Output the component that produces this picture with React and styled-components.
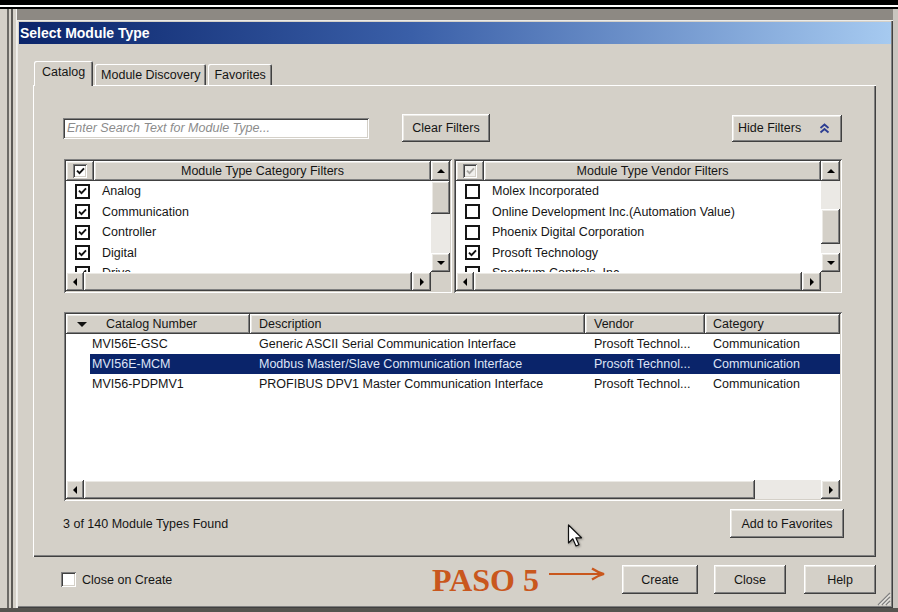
import React from 'react';
import styled, { createGlobalStyle, css } from 'styled-components';

const FACE = '#d4d0c8';
const SHADOW = '#808080';
const DARK = '#404040';
const LIGHT = '#ffffff';
const NAVY = '#0a246a';
const TRACK = '#ebe9e5';
const STEP = '#c9571d';

const GlobalStyle = createGlobalStyle`
  *, *::before, *::after { box-sizing: border-box; }
  html, body { margin: 0; padding: 0; }
  body {
    font-family: "Liberation Sans", Arial, sans-serif;
    font-size: 12.5px;
    color: #151515;
  }
`;

const raised = css`
  background: ${FACE};
  box-shadow:
    inset -1px -1px ${DARK},
    inset 1px 1px ${LIGHT},
    inset -2px -2px ${SHADOW},
    inset 2px 2px #ebe9e4;
`;

const sunken = css`
  box-shadow:
    inset 1px 1px ${SHADOW},
    inset -1px -1px ${LIGHT},
    inset 2px 2px ${DARK},
    inset -2px -2px ${FACE};
`;

const categories = [
  { label: 'Analog', checked: true },
  { label: 'Communication', checked: true },
  { label: 'Controller', checked: true },
  { label: 'Digital', checked: true },
  { label: 'Drive', checked: true },
];

const vendors = [
  { label: 'Molex Incorporated', checked: false },
  { label: 'Online Development Inc.(Automation Value)', checked: false },
  { label: 'Phoenix Digital Corporation', checked: false },
  { label: 'Prosoft Technology', checked: true },
  { label: 'Spectrum Controls, Inc.', checked: false },
];

const modules = [
  ['MVI56E-GSC', 'Generic ASCII Serial Communication Interface', 'Prosoft Technol...', 'Communication'],
  ['MVI56E-MCM', 'Modbus Master/Slave Communication Interface', 'Prosoft Technol...', 'Communication'],
  ['MVI56-PDPMV1', 'PROFIBUS DPV1 Master Communication Interface', 'Prosoft Technol...', 'Communication'],
];

/* ---------- desktop frame ---------- */

const Screen = styled.div`
  position: relative;
  width: 898px;
  height: 612px;
  display: flex;
  flex-direction: column;
  background: #55534f;
  overflow: hidden;
`;

const TopBand = styled.div`
  height: 9px;
  background: linear-gradient(#000 0 5px, #fff 5px 7px, #000 7px 9px);
`;

const Desk = styled.div`
  height: 599px;
  display: flex;
`;

const LeftEdge = styled.div`
  width: 17px;
  background: linear-gradient(
    to right,
    ${FACE} 0 7px,
    #6c6a66 7px 9px,
    ${FACE} 9px 11px,
    #5c5a56 11px 13px,
    ${FACE} 13px 16px,
    #f2f1ee 16px 17px
  );
`;

const RightEdge = styled.div`
  width: 5px;
  background: #c9c5bf;
`;

const Behind = styled.div`
  flex: 1;
  display: flex;
  flex-direction: column;
  padding-top: 11px;
  background: #8d8983;
`;

/* ---------- dialog ---------- */

const Dialog = styled.div`
  position: relative;
  flex: 1;
  display: flex;
  flex-direction: column;
  padding: 2px;
  background: ${FACE};
  box-shadow:
    inset 1px 1px #ecebe7,
    inset -1px -1px ${DARK},
    inset -2px -2px ${SHADOW};
`;

const TitleBar = styled.div`
  height: 22px;
  display: flex;
  align-items: center;
  padding-left: 1px;
  background: linear-gradient(to right, ${NAVY} 0%, #3a5fa8 45%, #a6caf0 100%);
  color: #fff;
  font-weight: bold;
  font-size: 14px;
`;

const DialogBody = styled.div`
  flex: 1;
  display: flex;
  flex-direction: column;
  padding: 17px 15px 0 14px;
`;

const TabStrip = styled.div`
  height: 24px;
  display: flex;
  align-items: flex-end;
  gap: 2px;
  padding-left: 1px;
`;

const Tab = styled.div`
  position: relative;
  display: flex;
  align-items: center;
  height: ${p => (p.active ? '25px' : '21px')};
  margin-bottom: ${p => (p.active ? '-1px' : '0')};
  padding: 0 ${p => (p.active ? '8px' : '6px')};
  padding-bottom: ${p => (p.active ? '3px' : '0')};
  z-index: ${p => (p.active ? 2 : 1)};
  background: ${FACE};
  border-radius: 2px 2px 0 0;
  box-shadow:
    inset 1px 1px ${LIGHT},
    inset -1px 0 ${DARK},
    inset -2px 0 ${SHADOW};
`;

const Panel = styled.div`
  height: 472px;
  display: flex;
  flex-direction: column;
  padding: 29px 34px 19px 31px;
  box-shadow:
    inset 1px 1px ${LIGHT},
    inset -1px -1px ${DARK},
    inset -2px -2px ${SHADOW};
`;

/* ---------- controls ---------- */

const Button = styled.div`
  ${raised};
  display: flex;
  align-items: center;
  justify-content: ${p => (p.spread ? 'space-between' : 'center')};
  width: ${p => p.w}px;
  height: ${p => p.h || 29}px;
  margin-left: ${p => p.ml || 0}px;
  padding: ${p => (p.spread ? '0 12px 0 6px' : '0')};
`;

const Toolbar = styled.div`
  height: 28px;
  display: flex;
  align-items: center;
`;

const SearchBox = styled.input`
  ${sunken};
  width: 306px;
  height: 21px;
  margin-left: -1px;
  padding: 0 4px;
  border: none;
  outline: none;
  background: #fff;
  font-family: "Liberation Sans", Arial, sans-serif;
  font-size: 12.5px;

  &::placeholder {
    color: #8c8c8c;
    font-style: italic;
  }
`;

const Push = styled.div`
  flex: 1;
`;

const FilterRow = styled.div`
  display: flex;
  gap: 2px;
  height: 134px;
  margin-top: 17px;
`;

const ListFrame = styled.div`
  ${sunken};
  flex: ${p => (p.grow ? 1 : 'none')};
  height: ${p => p.h}px;
  margin-top: ${p => p.mt || 0}px;
  padding: 2px;
  display: grid;
  grid-template-columns: ${p => (p.vscroll ? '1fr 19px' : '1fr')};
  grid-template-rows: 1fr 19px;
  background: #fff;
`;

const ListCore = styled.div`
  min-width: 0;
  min-height: 0;
  display: flex;
  flex-direction: column;
  overflow: hidden;
`;

const HeaderRow = styled.div`
  height: 20px;
  flex: none;
  display: flex;
`;

const HeaderCell = styled.div`
  ${raised};
  display: flex;
  align-items: center;
  justify-content: ${p => (p.center ? 'center' : 'flex-start')};
  width: ${p => (p.w ? `${p.w}px` : 'auto')};
  flex: ${p => (p.w ? 'none' : 1)};
  padding-left: ${p => p.pl || 0}px;
  white-space: nowrap;
`;

const FilterItem = styled.div`
  height: 20.5px;
  flex: none;
  display: flex;
  align-items: center;
  padding-left: 9px;
  white-space: nowrap;
`;

const FlatBox = styled.div`
  width: 15px;
  height: 15px;
  flex: none;
  display: flex;
  align-items: center;
  justify-content: center;
  margin-right: 12px;
  border: 2px solid #161616;
  background: #fff;
`;

const SunkenBox = styled.div`
  ${sunken};
  width: ${p => p.size || 15}px;
  height: ${p => p.size || 15}px;
  flex: none;
  display: flex;
  align-items: center;
  justify-content: center;
  background: ${p => (p.muted ? '#f0efec' : '#fff')};
`;

const Tick = ({ color = '#111' }) => (
  <svg width="9" height="8" viewBox="0 0 9 8">
    <path d="M1 3.6 L3.5 6.2 L8 1.4" fill="none" stroke={color} strokeWidth="1.9" />
  </svg>
);

const VScroll = styled.div`
  display: flex;
  flex-direction: column;
  background: ${TRACK};
`;

const HScroll = styled.div`
  display: flex;
  background: ${TRACK};
`;

const ScrollButton = styled.div`
  ${raised};
  flex: none;
  display: flex;
  align-items: center;
  justify-content: center;
  width: ${p => p.w || 19}px;
  height: ${p => p.h || 19}px;
`;

const Thumb = styled.div`
  ${raised};
  flex: ${p => (p.fill ? 1 : 'none')};
  width: ${p => (p.w ? `${p.w}px` : 'auto')};
  height: ${p => (p.h ? `${p.h}px` : 'auto')};
  margin-top: ${p => p.mt || 0}px;
`;

const Track = styled.div`
  flex: 1;
  display: flex;
  flex-direction: ${p => (p.vertical ? 'column' : 'row')};
`;

const Corner = styled.div`
  background: ${FACE};
`;

const Triangle = styled.span`
  width: 0;
  height: 0;
  ${p => p.dir === 'up' && css`
    border-left: 4px solid transparent;
    border-right: 4px solid transparent;
    border-bottom: 4px solid #000;
  `}
  ${p => p.dir === 'down' && css`
    border-left: 4px solid transparent;
    border-right: 4px solid transparent;
    border-top: 4px solid #000;
  `}
  ${p => p.dir === 'left' && css`
    border-top: 4px solid transparent;
    border-bottom: 4px solid transparent;
    border-right: 4px solid #000;
  `}
  ${p => p.dir === 'right' && css`
    border-top: 4px solid transparent;
    border-bottom: 4px solid transparent;
    border-left: 4px solid #000;
  `}
`;

const SortMark = styled.span`
  width: 0;
  height: 0;
  margin-right: 19px;
  border-left: 5px solid transparent;
  border-right: 5px solid transparent;
  border-top: 5px solid #111;
`;

const columns = '184px 335px 120px 1fr';

const CatalogHeader = styled.div`
  height: 20px;
  flex: none;
  display: grid;
  grid-template-columns: ${columns};
`;

const CatalogRow = styled.div`
  height: 20px;
  flex: none;
  display: grid;
  grid-template-columns: ${columns};
  align-items: center;
  white-space: nowrap;
  color: ${p => (p.selected ? '#dfe5f7' : '#151515')};
  background: ${p => (p.selected ? `linear-gradient(to right, transparent 24px, ${NAVY} 24px)` : 'transparent')};
`;

const Cell = styled.span`
  padding-left: ${p => p.pl}px;
  overflow: hidden;
`;

const Footer = styled.div`
  height: 29px;
  margin-top: 8px;
  display: flex;
  align-items: center;
  justify-content: space-between;
`;

const Status = styled.span`
  margin-left: -1px;
`;

const BottomBar = styled.div`
  height: 29px;
  margin-top: 8px;
  display: flex;
  align-items: center;
  padding-left: 28px;
`;

const CheckLabel = styled.div`
  display: flex;
  align-items: center;
  gap: 6px;
`;

const StepLabel = styled.span`
  margin-right: 10px;
  font-family: "Liberation Serif", "Times New Roman", serif;
  font-weight: bold;
  font-size: 32px;
  line-height: 1;
  color: ${STEP};
`;

const StepArrow = styled.svg`
  margin: -12px 17px 0 0;
`;

const Grip = styled.svg`
  position: absolute;
  right: 2px;
  bottom: 2px;
`;

const Pointer = styled.svg`
  position: absolute;
  left: 567px;
  top: 524px;
  filter: drop-shadow(1px 1px 1px rgba(0, 0, 0, 0.35));
`;

/* ---------- pieces ---------- */

function VerticalBar({ thumbTop, thumbHeight }) {
  return (
    <VScroll>
      <ScrollButton h={20}><Triangle dir="up" /></ScrollButton>
      <Track vertical>
        <Thumb h={thumbHeight} mt={thumbTop} />
      </Track>
      <ScrollButton><Triangle dir="down" /></ScrollButton>
    </VScroll>
  );
}

function HorizontalBar({ thumbWidth }) {
  return (
    <HScroll>
      <ScrollButton w={18}><Triangle dir="left" /></ScrollButton>
      <Track>
        {thumbWidth ? <Thumb w={thumbWidth} /> : <Thumb fill />}
      </Track>
      <ScrollButton><Triangle dir="right" /></ScrollButton>
    </HScroll>
  );
}

function FilterList({ title, items, muted, thumbTop, thumbHeight }) {
  return (
    <ListFrame grow vscroll h={134}>
      <ListCore>
        <HeaderRow>
          <HeaderCell w={28} center>
            <SunkenBox size={14} muted={muted}>
              <Tick color={muted ? '#a9a7a2' : '#111'} />
            </SunkenBox>
          </HeaderCell>
          <HeaderCell center>{title}</HeaderCell>
        </HeaderRow>
        {items.map(item => (
          <FilterItem key={item.label}>
            <FlatBox>{item.checked && <Tick />}</FlatBox>
            {item.label}
          </FilterItem>
        ))}
      </ListCore>
      <VerticalBar thumbTop={thumbTop} thumbHeight={thumbHeight} />
      <HorizontalBar />
      <Corner />
    </ListFrame>
  );
}

function CatalogList() {
  return (
    <ListFrame h={189} mt={19}>
      <ListCore>
        <CatalogHeader>
          <HeaderCell pl={11}><SortMark />Catalog Number</HeaderCell>
          <HeaderCell pl={9}>Description</HeaderCell>
          <HeaderCell pl={9}>Vendor</HeaderCell>
          <HeaderCell pl={8}>Category</HeaderCell>
        </CatalogHeader>
        {modules.map(([num, desc, vendor, cat], i) => (
          <CatalogRow key={num} selected={i === 1}>
            <Cell pl={26}>{num}</Cell>
            <Cell pl={9}>{desc}</Cell>
            <Cell pl={9}>{vendor}</Cell>
            <Cell pl={8}>{cat}</Cell>
          </CatalogRow>
        ))}
      </ListCore>
      <HorizontalBar thumbWidth={671} />
    </ListFrame>
  );
}

export default function App() {
  return (
    <>
      <GlobalStyle />
      <Screen>
        <TopBand />
        <Desk>
          <LeftEdge />
          <Behind>
            <Dialog>
              <TitleBar>Select Module Type</TitleBar>
              <DialogBody>
                <TabStrip>
                  <Tab active>Catalog</Tab>
                  <Tab>Module Discovery</Tab>
                  <Tab>Favorites</Tab>
                </TabStrip>
                <Panel>
                  <Toolbar>
                    <SearchBox placeholder="Enter Search Text for Module Type..." readOnly />
                    <Button w={88} h={28} ml={33}>Clear Filters</Button>
                    <Push />
                    <Button w={110} h={27} spread>
                      Hide Filters
                      <svg width="11" height="11" viewBox="0 0 11 11">
                        <path d="M1.5 5 L5.5 1.5 L9.5 5 M1.5 9.5 L5.5 6 L9.5 9.5" fill="none" stroke="#2c3d92" strokeWidth="1.8" />
                      </svg>
                    </Button>
                  </Toolbar>

                  <FilterRow>
                    <FilterList
                      title="Module Type Category Filters"
                      items={categories}
                      thumbTop={0}
                      thumbHeight={33}
                    />
                    <FilterList
                      title="Module Type Vendor Filters"
                      items={vendors}
                      muted
                      thumbTop={28}
                      thumbHeight={35}
                    />
                  </FilterRow>

                  <CatalogList />

                  <Footer>
                    <Status>3 of 140 Module Types Found</Status>
                    <Button w={114} h={29} style={{ marginRight: -2 }}>Add to Favorites</Button>
                  </Footer>
                </Panel>

                <BottomBar>
                  <CheckLabel>
                    <SunkenBox />
                    Close on Create
                  </CheckLabel>
                  <Push />
                  <StepLabel>PASO 5</StepLabel>
                  <StepArrow width="56" height="14" viewBox="0 0 56 14">
                    <path d="M0 7 H53" stroke={STEP} strokeWidth="2.2" />
                    <path d="M43 1.5 Q49 5.5 55 7 Q49 8.5 43 12.5" fill="none" stroke={STEP} strokeWidth="2.2" />
                  </StepArrow>
                  <Button w={76}>Create</Button>
                  <Button w={72} ml={16}>Close</Button>
                  <Button w={72} ml={18}>Help</Button>
                </BottomBar>
              </DialogBody>
              <Grip width="14" height="14" viewBox="0 0 14 14">
                <path d="M13 1 L1 13 M13 5 L5 13 M13 9 L9 13" stroke={SHADOW} strokeWidth="1.4" />
                <path d="M13 2.5 L2.5 13 M13 6.5 L6.5 13 M13 10.5 L10.5 13" stroke={LIGHT} strokeWidth="0.8" />
              </Grip>
            </Dialog>
          </Behind>
          <RightEdge />
        </Desk>
        <Pointer width="19" height="24" viewBox="0 0 19 24">
          <path
            d="M1.5 1 L1.5 19 L5.8 14.8 L9 22 L12 20.8 L8.8 13.8 L14.5 13.8 Z"
            fill="#fff"
            stroke="#111"
            strokeWidth="1.2"
            strokeLinejoin="round"
          />
        </Pointer>
      </Screen>
    </>
  );
}
